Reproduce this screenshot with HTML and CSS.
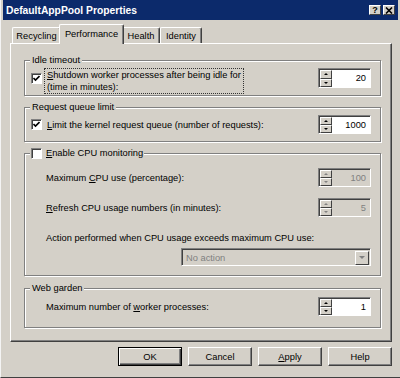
FILE: index.html
```html
<!DOCTYPE html>
<html>
<head>
  <title>DefaultAppPool Properties</title>
  <link rel="stylesheet" href="styles.css">
</head>
<body>
  <div class="window">
    <div class="titlebar">
      <span class="title">DefaultAppPool Properties</span>
      <div class="caption-buttons">
        <span class="cap-btn">?</span>
        <span class="cap-btn">
          <svg width="8" height="7" viewBox="0 0 8 7"><path d="M1 0.5 L7 6.5 M7 0.5 L1 6.5" stroke="#000" stroke-width="1.6"/></svg>
        </span>
      </div>
    </div>

    <div class="client">
      <div class="tabs">
        <div class="tab tab-recycling">Recycling</div>
        <div class="tab tab-performance active">Performance</div>
        <div class="tab tab-health">Health</div>
        <div class="tab tab-identity">Identity</div>
      </div>

      <div class="panel">
        <fieldset class="group idle">
          <legend>Idle timeout</legend>
          <div class="row">
            <span class="check checked"><svg width="7" height="7" viewBox="0 0 7 7"><polyline points="0.5,3 2.5,5 6.5,1" fill="none" stroke="#000" stroke-width="1.6"/></svg></span>
            <span class="focus-label"><u>S</u>hutdown worker processes after being idle for<br>(time in minutes):</span>
            <div class="spin">
              <div class="arrows"><span class="arrow up"></span><span class="arrow down"></span></div>
              <div class="val">20</div>
            </div>
          </div>
        </fieldset>

        <fieldset class="group queue">
          <legend>Request queue limit</legend>
          <div class="row">
            <span class="check checked"><svg width="7" height="7" viewBox="0 0 7 7"><polyline points="0.5,3 2.5,5 6.5,1" fill="none" stroke="#000" stroke-width="1.6"/></svg></span>
            <span class="text-label"><u>L</u>imit the kernel request queue (number of requests):</span>
            <div class="spin">
              <div class="arrows"><span class="arrow up"></span><span class="arrow down"></span></div>
              <div class="val">1000</div>
            </div>
          </div>
        </fieldset>

        <fieldset class="group cpu">
          <legend><span class="check"></span><span class="legend-text"><u>E</u>nable CPU monitoring</span></legend>
          <div class="row cpu-max">
            <span>Maximum <u>C</u>PU use (percentage):</span>
            <div class="spin disabled">
              <div class="arrows"><span class="arrow up"></span><span class="arrow down"></span></div>
              <div class="val">100</div>
            </div>
          </div>
          <div class="row cpu-refresh">
            <span><u>R</u>efresh CPU usage numbers (in minutes):</span>
            <div class="spin disabled">
              <div class="arrows"><span class="arrow up"></span><span class="arrow down"></span></div>
              <div class="val">5</div>
            </div>
          </div>
          <div class="action-label">Action performed when CPU usage exceeds maximum CPU use:</div>
          <div class="select">
            <span class="select-text">No action</span>
            <span class="select-btn"><span class="arrow down"></span></span>
          </div>
        </fieldset>

        <fieldset class="group web">
          <legend>Web garden</legend>
          <div class="row">
            <span>Maximum number of <u>w</u>orker processes:</span>
            <div class="spin">
              <div class="arrows"><span class="arrow up"></span><span class="arrow down"></span></div>
              <div class="val">1</div>
            </div>
          </div>
        </fieldset>
      </div>

      <div class="buttons">
        <button class="btn default" type="button">OK</button>
        <button class="btn" type="button">Cancel</button>
        <button class="btn" type="button"><u>A</u>pply</button>
        <button class="btn" type="button">Help</button>
      </div>
    </div>
  </div>
</body>
</html>
```

FILE: styles.css
```css
body {
  margin: 0;
  background-color: #d4d0c8;
  font-family: "Liberation Sans", Arial, sans-serif;
  font-size: 9.3px;
  color: #000;
}

.window {
  width: 400px;
  height: 378px;
  box-sizing: border-box;
  padding: 0 2px;
  border-left: 1px solid #f4f4f4;
  border-bottom: 1px solid #404040;
  overflow: hidden;
}

/* Title bar */
.titlebar {
  height: 20px;
  background-color: #0c2a6b;
  display: flex;
  align-items: center;
  justify-content: space-between;
  padding: 0 3px 0 3px;
}

.title {
  color: #fff;
  font-weight: bold;
  font-size: 10.3px;
  padding-top: 1px;
}

.caption-buttons {
  display: flex;
  gap: 2px;
}

.cap-btn {
  width: 12px;
  height: 10px;
  box-sizing: border-box;
  background-color: #d4d0c8;
  border: 1px solid;
  border-color: #fff #404040 #404040 #fff;
  display: flex;
  align-items: center;
  justify-content: center;
  font-weight: bold;
  font-size: 9px;
  line-height: 8px;
}

/* Client area */
.client {
  padding: 4px 6px 0 7px;
}

.tabs {
  display: flex;
  align-items: flex-end;
  height: 20px;
  padding-left: 2px;
  margin-bottom: -1px;
  position: relative;
  z-index: 1;
}

.tab {
  height: 16px;
  box-sizing: border-box;
  margin-bottom: 1px;
  border-top: 1px solid #fff;
  border-left: 1px solid #fff;
  border-right: 1px solid #404040;
  box-shadow: inset -1px 0 #808080;
  border-radius: 2px 2px 0 0;
  background-color: #d4d0c8;
  display: flex;
  align-items: center;
  justify-content: center;
  padding-top: 1px;
}

.tab-recycling { width: 49px; }
.tab-performance { width: 61px; }
.tab-health { width: 38px; }
.tab-identity { width: 42px; }

.tab.active {
  height: 20px;
  margin: 0 -2px;
  width: 65px;
  position: relative;
  z-index: 2;
  padding-top: 0;
  padding-bottom: 2px;
}

.panel {
  width: 382px;
  height: 299px;
  box-sizing: border-box;
  border-top: 1px solid #fff;
  border-left: 1px solid #fff;
  border-right: 1px solid #404040;
  border-bottom: 1px solid #404040;
  box-shadow: inset -1px -1px #808080;
  padding: 10px 10px 0 13px;
}

/* Group boxes */
.group {
  margin: 0;
  padding: 0 9px 0 0;
  min-width: 0;
  border: 1px solid #808080;
  box-shadow: inset 1px 1px #fff, 1px 1px #fff;
}

.group legend {
  margin-left: 5px;
  padding: 0 2px;
  line-height: 13px;
  background-color: #d4d0c8;
}

.row {
  display: flex;
  align-items: center;
}

.row .spin {
  margin-left: auto;
}

.check {
  width: 11px;
  height: 11px;
  box-sizing: border-box;
  background-color: #fff;
  border: 1px solid;
  border-color: #808080 #fff #fff #808080;
  box-shadow: inset 1px 1px #404040;
  display: flex;
  align-items: center;
  justify-content: center;
  flex-shrink: 0;
}

.idle .row {
  padding: 2px 0 2px 6px;
  align-items: flex-start;
}

.idle .check {
  margin-top: 4px;
}

.idle .spin {
  margin-top: -1px;
  height: 20px;
}

.focus-label {
  margin-left: 3px;
  padding: 0 2px;
  line-height: 12px;
  outline: 1px dotted #333;
}

.queue .row {
  padding: 1px 0 7px 6px;
}

.text-label {
  margin-left: 5px;
}

.cpu {
  margin-top: 5px;
  padding-left: 21px;
  padding-bottom: 9px;
}

.queue {
  margin-top: 5px;
}

.cpu legend {
  display: flex;
  align-items: center;
  margin-left: -16px;
  padding: 0 1px;
}

.legend-text {
  margin-left: 4px;
}

.cpu-max {
  margin-top: 8px;
}

.cpu-refresh {
  margin-top: 11px;
}

.action-label {
  margin-top: 15px;
  line-height: 12px;
}

.web {
  margin-top: 6px;
  padding-left: 21px;
}

.web legend {
  margin-left: -16px;
}

.web .row {
  padding: 2px 0 11px 0;
}

/* Spin controls */
.spin {
  width: 53px;
  height: 19px;
  box-sizing: border-box;
  display: flex;
  border: 1px solid;
  border-color: #808080 #fff #fff #808080;
  box-shadow: inset 1px 1px #404040;
  background-color: #fff;
  padding: 1px 0 0 1px;
}

.arrows {
  width: 12px;
  display: flex;
  flex-direction: column;
}

.arrows .arrow {
  flex: 1;
  box-sizing: border-box;
  background-color: #d4d0c8;
  border: 1px solid;
  border-color: #fff #404040 #404040 #fff;
  display: flex;
  align-items: center;
  justify-content: center;
}

.arrow::after {
  content: "";
  width: 0;
  height: 0;
  border-left: 2px solid transparent;
  border-right: 2px solid transparent;
}

.arrow.up::after {
  border-bottom: 2px solid #000;
}

.arrow.down::after {
  border-top: 2px solid #000;
}

.val {
  flex: 1;
  text-align: right;
  padding-right: 4px;
  line-height: 16px;
}

.spin.disabled {
  background-color: #d4d0c8;
}

.spin.disabled .val {
  color: #808080;
}

.spin.disabled .arrow::after {
  border-bottom-color: #808080;
  border-top-color: #808080;
}

/* Drop down */
.select {
  margin: 4px 0 0 auto;
  width: 190px;
  height: 18px;
  box-sizing: border-box;
  border: 1px solid;
  border-color: #808080 #fff #fff #808080;
  box-shadow: inset 1px 1px #404040;
  background-color: #d4d0c8;
  display: flex;
  align-items: center;
  padding: 1px 1px 0 1px;
}

.select-text {
  flex: 1;
  color: #808080;
  padding-left: 3px;
}

.select-btn {
  width: 14px;
  height: 14px;
  box-sizing: border-box;
  border: 1px solid;
  border-color: #fff #404040 #404040 #fff;
  display: flex;
  align-items: center;
  justify-content: center;
}

.select-btn .arrow::after {
  display: block;
  border-left-width: 3px;
  border-right-width: 3px;
  border-top: 3px solid #808080;
}

/* Bottom buttons */
.buttons {
  display: flex;
  justify-content: flex-end;
  gap: 6px;
  width: 382px;
  margin-top: 5px;
}

.btn {
  width: 64px;
  height: 19px;
  box-sizing: border-box;
  background-color: #d4d0c8;
  border: 1px solid;
  border-color: #fff #404040 #404040 #fff;
  box-shadow: inset -1px -1px #808080;
  font-family: "Liberation Sans", Arial, sans-serif;
  font-size: 9.3px;
  color: #000;
  padding: 0;
}

.btn.default {
  border-color: #000;
  box-shadow: inset 1px 1px #fff, inset -1px -1px #404040, inset -2px -2px #808080;
}
```
